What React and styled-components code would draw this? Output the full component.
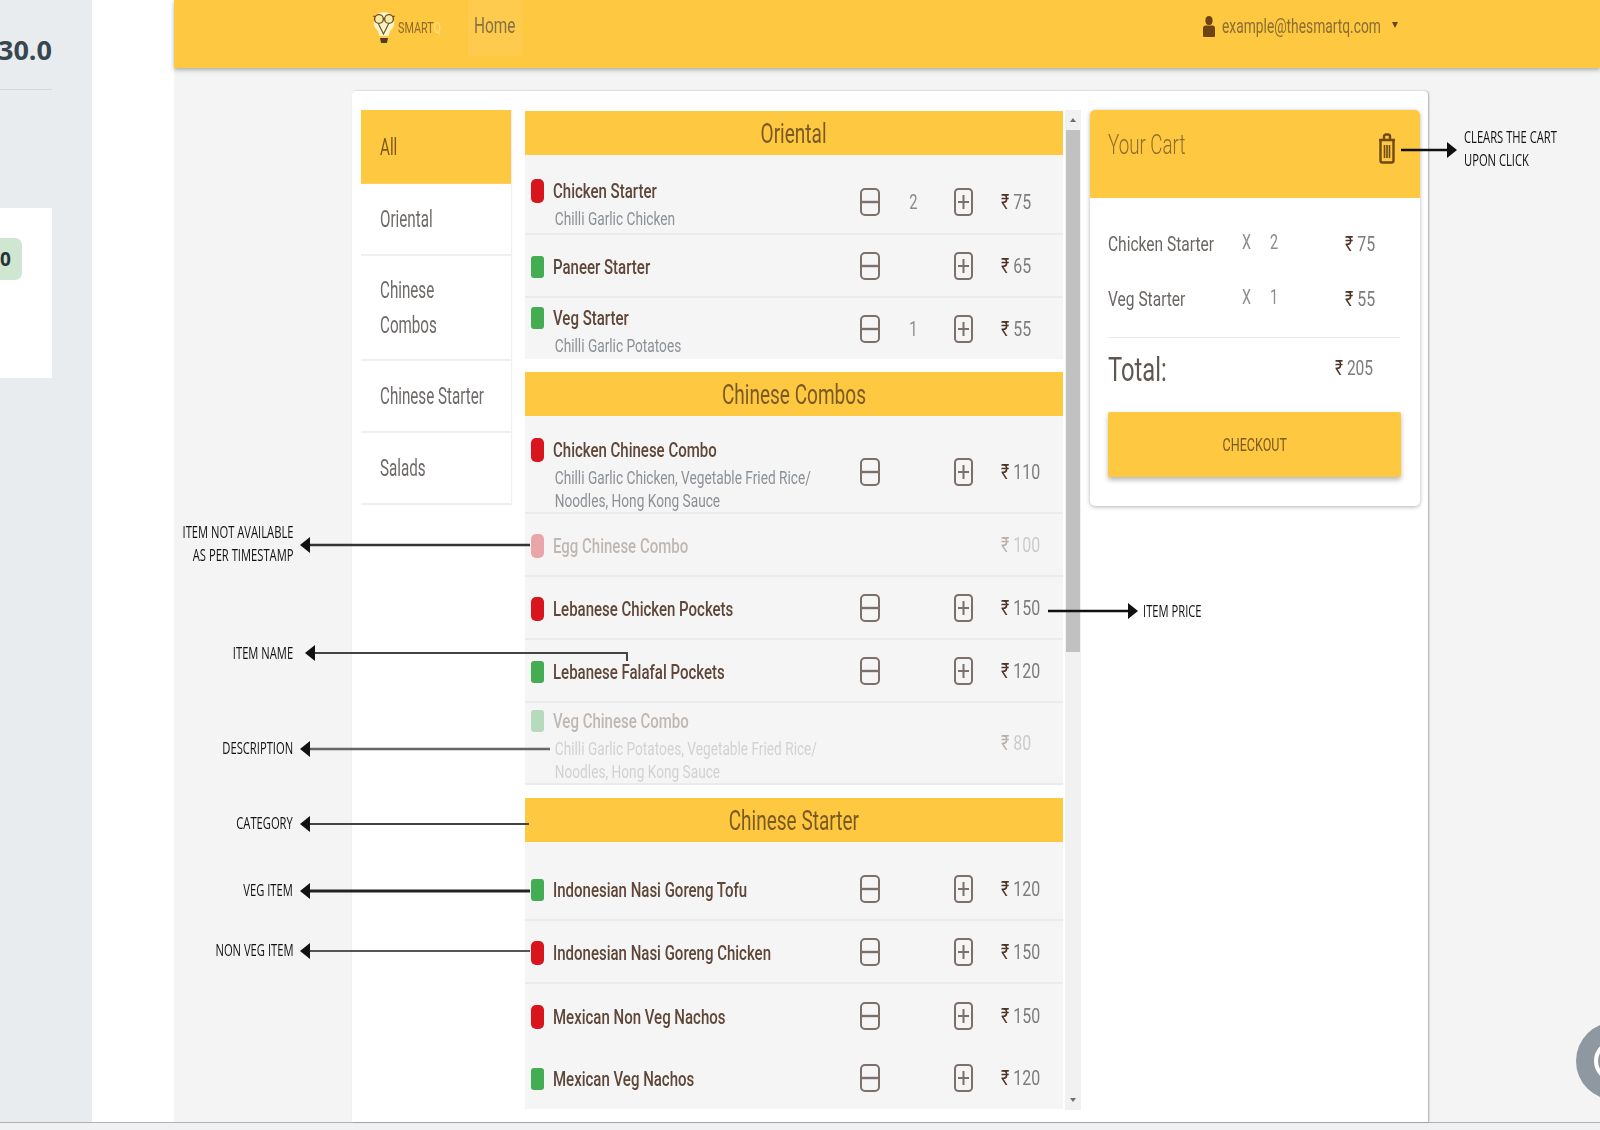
import React from 'react'
import styled, { createGlobalStyle, css } from 'styled-components'

const YELLOW = '#fec841'
const FONT = `Roboto, "Liberation Sans", sans-serif`

const GlobalStyle = createGlobalStyle`
  html, body {
    margin: 0;
    padding: 0;
    background: #fff;
    font-family: ${FONT};
  }
`

const squeeze = (x, origin = 'left center') => css`
  display: inline-block;
  white-space: nowrap;
  transform: scaleX(${x});
  transform-origin: ${origin};
`

const Page = styled.div`
  position: relative;
  width: 1600px;
  height: 1130px;
  overflow: hidden;
  display: flex;
  flex-direction: column;
`

const TopArea = styled.div`
  flex: 1;
  min-height: 0;
  display: flex;
`

const BottomBar = styled.div`
  height: 7px;
  background: #eff1f2;
  border-top: 1px solid #b0b3b5;
`

/* the dashboard behind the screenshot */
const Sidebar = styled.aside`
  width: 92px;
  flex: none;
  background: #e8ecef;
  box-shadow: 1px 0 2px #b5bcc2;
  padding: 33px 40px 0 0;
  box-sizing: border-box;
  overflow: hidden;
  display: flex;
  flex-direction: column;
  align-items: flex-end;
`

const Stat = styled.div`
  width: 52px;
  height: 56px;
  border-bottom: 1px solid #d4d9dd;
  font: 700 27px/34px "Open Sans", sans-serif;
  color: #37474f;
  text-align: right;
  white-space: nowrap;
  direction: rtl;
`

const SideCard = styled.div`
  width: 52px;
  height: 170px;
  margin-top: 118px;
  background: #fff;
  padding-top: 30px;
  box-sizing: border-box;
`

const SideBadge = styled.div`
  width: 22px;
  height: 42px;
  background: #cfe6d0;
  border-radius: 0 7px 7px 0;
  font: 700 19px/42px "Open Sans", sans-serif;
  color: #263238;
`

const Gutter = styled.div`
  width: 82px;
  flex: none;
  background: #fff;
`

/* the screenshot of the ordering page */
const Shot = styled.main`
  flex: 1;
  min-width: 0;
  background: #f4f4f4;
  filter: blur(0.6px);
  display: flex;
  flex-direction: column;
`

const Header = styled.header`
  height: 68px;
  flex: none;
  background: ${YELLOW};
  box-shadow: 0 2px 4px rgba(70, 90, 90, 0.45);
  padding: 0 202px 0 198px;
  display: flex;
  align-items: flex-start;
`

const Logo = styled.div`
  width: 96px;
  height: 56px;
  flex: none;
  display: flex;
  align-items: center;
  gap: 2px;
`

const LogoText = styled.span`
  ${squeeze(0.72)};
  font-size: 15px;
  color: #8d6a2a;
  width: 50px;

  b {
    font-weight: 400;
    color: #ffe385;
  }
`

const HomeTab = styled.div`
  width: 54px;
  height: 56px;
  padding-left: 6px;
  box-sizing: border-box;
  background: rgba(255, 255, 255, 0.07);
  line-height: 52px;
  flex: none;
`

const HomeText = styled.span`
  ${squeeze(0.7)};
  font-size: 22px;
  color: #857242;
`

const UserMenu = styled.div`
  margin-left: auto;
  height: 52px;
  display: flex;
  align-items: center;
`

const Email = styled.span`
  width: 170px;
  margin-left: 7px;

  span {
    ${squeeze(0.69)};
    font-size: 20px;
    color: #8a6d34;
  }
`

const Caret = styled.span`
  width: 0;
  height: 0;
  border-left: 3.5px solid transparent;
  border-right: 3.5px solid transparent;
  border-top: 6px solid #6d4312;
  margin-bottom: 3px;
`

const Panel = styled.section`
  margin: 23px 172px 0 178px;
  flex: 1;
  min-height: 0;
  background: #fff;
  border-radius: 4px 4px 0 0;
  box-shadow: 1px 0 2px rgba(0, 0, 0, 0.3);
  padding: 19px 8px 0 9px;
  display: flex;
  align-items: flex-start;
`

const CategoryList = styled.nav`
  width: 150px;
  flex: none;
  margin-right: 14px;
`

const Category = styled.div`
  height: ${p => p.$h}px;
  box-sizing: border-box;
  padding: 1px 19px 0;
  display: flex;
  flex-direction: column;
  justify-content: center;
  background: ${p => (p.$active ? YELLOW : '#fff')};
  border-bottom: ${p => (p.$active ? 'none' : '2px solid #eeeeee')};
  box-shadow: 1px 0 1px #f0f0f0;
`

const CategoryText = styled.span`
  ${squeeze(0.66)};
  font-size: 23px;
  line-height: 35px;
  color: ${p => (p.$active ? '#7a5a1c' : '#6e6a68')};
`

const MenuColumn = styled.div`
  width: 538px;
  flex: none;
  padding-top: 1px;
`

const SectionTitle = styled.h2`
  height: 44px;
  margin: ${p => (p.$first ? '0' : '13px 0 0')};
  background: ${YELLOW};
  display: flex;
  justify-content: center;
  align-items: center;
  font-weight: 400;
`

const SectionText = styled.span`
  ${squeeze(0.68, 'center')};
  font-size: 28px;
  color: #7a5a24;
`

const Row = styled.div`
  height: ${p => p.$h}px;
  box-sizing: border-box;
  padding: ${p => (p.$first ? '16px' : '0')} 0 0 6px;
  background: #f5f5f5;
  border-bottom: ${p => (p.$line ? '2px solid #ebebeb' : 'none')};
  display: flex;
  align-items: center;

  & > * {
    opacity: ${p => (p.$off ? 0.35 : 1)};
  }
`

const Info = styled.div`
  flex: 1;
  min-width: 0;
  padding-top: ${p => (p.$withDesc ? '3px' : '2px')};
`

const NameLine = styled.div`
  display: flex;
  align-items: center;
  gap: 9px;
  height: 28px;
  margin-bottom: ${p => (p.$withDesc ? '2px' : '0')};
`

const Dot = styled.span`
  width: 13px;
  height: ${p => (p.$veg ? 22 : 24)}px;
  flex: none;
  border-radius: ${p => (p.$veg ? 3 : 5)}px;
  background: ${p => (p.$veg ? '#44ac53' : '#d8141c')};
`

const ItemName = styled.span`
  ${squeeze(0.75)};
  font-size: 20px;
  font-weight: 500;
  color: #5e4638;
`

const ItemDesc = styled.div`
  ${squeeze(0.72)};
  display: block;
  padding-left: 33px;
  font-size: 19px;
  line-height: 23px;
  color: #8b9096;
`

const Stepper = styled.div`
  flex: none;
  width: 113px;
  display: flex;
  align-items: center;
  visibility: ${p => (p.$hidden ? 'hidden' : 'visible')};
`

const Qty = styled.span`
  width: 74px;
  flex: none;
  padding-right: 10px;
  box-sizing: border-box;
  text-align: center;
  font-size: 21px;
  color: #8c8c8c;
  ${squeeze(0.7, 'center')};
`

const Price = styled.div`
  flex: none;
  width: 62px;
  margin-left: 28px;
`

const PriceText = styled.span`
  ${squeeze(0.76)};
  font-size: 21px;
  color: #7c7c7c;

  b {
    font-weight: 400;
    color: #4f3425;
  }
`

const ScrollTrack = styled.div`
  width: 16px;
  height: 1000px;
  flex: none;
  margin: 0 9px 0 2px;
  background: #f1f1f1;
  display: flex;
  flex-direction: column;
  align-items: center;
  padding: 8px 0;
  box-sizing: border-box;
`

const ScrollArrow = styled.span`
  width: 0;
  height: 0;
  border-left: 3.5px solid transparent;
  border-right: 3.5px solid transparent;
  ${p => (p.$down ? 'border-top' : 'border-bottom')}: 4px solid #6f6f6f;
  margin-top: ${p => (p.$down ? 'auto' : '0')};
`

const ScrollThumb = styled.div`
  width: 14px;
  height: 522px;
  margin-top: 8px;
  background: #c1c1c1;
`

const Cart = styled.aside`
  width: 330px;
  flex: none;
  height: 396px;
  background: #fff;
  border-radius: 5px;
  box-shadow: 0 1px 4px rgba(0, 0, 0, 0.3);
`

const CartHeader = styled.div`
  height: 88px;
  box-sizing: border-box;
  background: ${YELLOW};
  border-radius: 5px 5px 0 0;
  padding: 18px 24px 0 18px;
  display: flex;
  justify-content: space-between;
`

const CartTitle = styled.span`
  ${squeeze(0.67)};
  font-size: 28px;
  font-weight: 300;
  line-height: 34px;
  color: #8f6d2d;
`

const TrashWrap = styled.div`
  padding-top: 5px;
`

const CartBody = styled.div`
  padding: 18px 20px 0 18px;
`

const CartRow = styled.div`
  height: 55px;
  display: flex;
  align-items: center;
`

const CartName = styled.div`
  width: 134px;

  span {
    ${squeeze(0.74)};
    font-size: 21px;
    color: #6a6664;
  }
`

const CartQty = styled.div`
  width: ${p => p.$w}px;
  margin-bottom: 4px;

  span {
    ${squeeze(0.72)};
    font-size: 20px;
    color: #8d8d8d;
  }
`

const CartPrice = styled.div`
  span {
    ${squeeze(0.76)};
    font-size: 21px;
    color: #7c7c7c;
  }

  b {
    font-weight: 400;
    color: #4f3425;
  }
`

const CartDivider = styled.hr`
  height: 1px;
  border: 0;
  margin: 11px 0 0;
  background: #eaeaea;
`

const TotalRow = styled.div`
  height: 74px;
  display: flex;
  align-items: flex-start;
`

const TotalLabel = styled.div`
  width: 227px;

  span {
    ${squeeze(0.72)};
    font-size: 33px;
    line-height: 64px;
    color: #5f5650;
  }
`

const TotalPrice = styled.div`
  span {
    ${squeeze(0.74)};
    font-size: 21px;
    line-height: 60px;
    color: #7c7c7c;
  }

  b {
    font-weight: 400;
    color: #4f3425;
  }
`

const CheckoutButton = styled.button`
  display: flex;
  width: 293px;
  height: 65px;
  border: 0;
  border-radius: 2px;
  background: ${YELLOW};
  box-shadow: 0 3px 5px rgba(0, 0, 0, 0.28);
  justify-content: center;
  align-items: center;
  font-family: ${FONT};
  padding: 0;

  span {
    ${squeeze(0.66, 'center')};
    font-size: 19px;
    color: #7a5a24;
  }
`

const Annotations = styled.svg`
  position: absolute;
  inset: 0;
  width: 1600px;
  height: 1130px;
  pointer-events: none;
`

const NoteLabel = styled.div`
  position: absolute;
  top: ${p => p.$y}px;
  ${p => (p.$right ? `right: ${1600 - p.$x}px;` : `left: ${p.$x}px;`)}
  font-family: "Open Sans", sans-serif;
  font-size: 16px;
  line-height: 23px;
  color: #111;
  white-space: nowrap;
  text-align: ${p => (p.$right ? 'right' : 'left')};
  transform: scaleX(0.7);
  transform-origin: ${p => (p.$right ? 'right' : 'left')} center;
`

const HelpBubble = styled.div`
  position: absolute;
  left: 1576px;
  top: 1022px;
  width: 78px;
  height: 78px;
  border-radius: 50%;
  background: #8f98a1;

  &::after {
    content: '';
    position: absolute;
    left: 18px;
    top: 18px;
    width: 42px;
    height: 42px;
    box-sizing: border-box;
    border: 4px solid #fff;
    border-radius: 50%;
  }
`

const MinusIcon = () => (
  <svg width="20" height="28" viewBox="0 0 20 28" fill="none" stroke="#7d706a" strokeWidth="2">
    <rect x="1" y="1" width="18" height="26" rx="4" />
    <path d="M2 14h16" strokeWidth="2.4" />
  </svg>
)

const PlusIcon = () => (
  <svg width="19" height="28" viewBox="0 0 19 28" fill="none" stroke="#7d706a" strokeWidth="2">
    <rect x="1" y="1" width="17" height="26" rx="3.5" />
    <path d="M4 14h11M9.5 7v14" />
  </svg>
)

const TrashIcon = () => (
  <svg width="18" height="31" viewBox="0 0 18 31" fill="none" stroke="#6f4a12" strokeWidth="2.4">
    <path d="M1 7h16M6 6V3.5a2 2 0 0 1 2-2h2a2 2 0 0 1 2 2V6" />
    <path d="M2.5 7v20.5a2 2 0 0 0 2 2h9a2 2 0 0 0 2-2V7" />
    <path d="M6.5 12v13M9 12v13M11.5 12v13" strokeWidth="1.6" />
  </svg>
)

const UserIcon = () => (
  <svg width="12" height="21" viewBox="0 0 12 21" fill="#6d4312">
    <ellipse cx="6" cy="4.5" rx="3.6" ry="4.5" />
    <path d="M2.4 9.5h7.2c1.6 0 2.4 1.4 2.4 3V20a1 1 0 0 1-1 1H1a1 1 0 0 1-1-1v-7.5c0-1.6.8-3 2.4-3z" />
  </svg>
)

const LogoIcon = () => (
  <svg width="24" height="36" viewBox="0 0 24 36" fill="none">
    <path d="M12 2a10.5 10.5 0 0 0-7 18c1.6 1.7 2 3.4 2.2 6h9.6c.2-2.6.6-4.3 2.2-6a10.5 10.5 0 0 0-7-18z" fill="#fff3c9" />
    <circle cx="7" cy="9" r="4.4" stroke="#6b5426" strokeWidth="1.4" fill="#ffe9a6" />
    <circle cx="17" cy="9" r="4.4" stroke="#6b5426" strokeWidth="1.4" fill="#ffe9a6" />
    <path d="M1 6l3 1M23 6l-3 1M6.5 14l5 10 5-10" stroke="#6b5426" strokeWidth="1.2" />
    <path d="M8 28h8l-1 5H9z" fill="#4f3d1e" />
  </svg>
)

const categories = [
  { lines: ['All'], h: 74, active: true },
  { lines: ['Oriental'], h: 72 },
  { lines: ['Chinese', 'Combos'], h: 105 },
  { lines: ['Chinese Starter'], h: 72 },
  { lines: ['Salads'], h: 72 },
]

const sections = [
  {
    title: 'Oriental',
    items: [
      { name: 'Chicken Starter', desc: ['Chilli Garlic Chicken'], price: 75, qty: 2, h: 80, first: true, line: true },
      { name: 'Paneer Starter', veg: true, price: 65, h: 63, line: true },
      { name: 'Veg Starter', veg: true, desc: ['Chilli Garlic Potatoes'], price: 55, qty: 1, h: 61 },
    ],
  },
  {
    title: 'Chinese Combos',
    items: [
      {
        name: 'Chicken Chinese Combo',
        desc: ['Chilli Garlic Chicken, Vegetable Fried Rice/', 'Noodles, Hong Kong Sauce'],
        price: 110,
        h: 98,
        first: true,
        line: true,
      },
      { name: 'Egg Chinese Combo', price: 100, h: 63, off: true, line: true },
      { name: 'Lebanese Chicken Pockets', price: 150, h: 63, line: true },
      { name: 'Lebanese Falafal Pockets', veg: true, price: 120, h: 63, line: true },
      {
        name: 'Veg Chinese Combo',
        veg: true,
        desc: ['Chilli Garlic Potatoes, Vegetable Fried Rice/', 'Noodles, Hong Kong Sauce'],
        price: 80,
        h: 82,
        off: true,
        line: true,
      },
    ],
  },
  {
    title: 'Chinese Starter',
    items: [
      { name: 'Indonesian Nasi Goreng Tofu', veg: true, price: 120, h: 79, first: true, line: true },
      { name: 'Indonesian Nasi Goreng Chicken', price: 150, h: 63, line: true },
      { name: 'Mexican Non Veg Nachos', price: 150, h: 63 },
      { name: 'Mexican Veg Nachos', veg: true, price: 120, h: 62 },
    ],
  },
]

const cartItems = [
  { name: 'Chicken Starter', qty: 2, price: 75 },
  { name: 'Veg Starter', qty: 1, price: 55 },
]

// [tipX, endX, y, stroke, colour] for arrows pointing left, tail on the right
const leftArrows = [
  [300, 530, 545, 2.4, '#333'],
  [305, 627, 653, 2, '#444'],
  [300, 550, 749, 2.6, '#666'],
  [300, 529, 824, 2, '#444'],
  [300, 530, 891, 2.8, '#222'],
  [300, 530, 951, 2, '#555'],
]

const rightArrows = [
  [1048, 1138, 611],
  [1401, 1457, 150],
]

const leftNotes = [
  { y: 521, lines: ['ITEM NOT AVAILABLE', 'AS PER TIMESTAMP'] },
  { y: 642, lines: ['ITEM NAME'] },
  { y: 737, lines: ['DESCRIPTION'] },
  { y: 812, lines: ['CATEGORY'] },
  { y: 879, lines: ['VEG ITEM'] },
  { y: 939, lines: ['NON VEG ITEM'] },
]

const Lines = ({ lines }) =>
  lines.map((line, i) => (
    <React.Fragment key={line}>
      {i > 0 && <br />}
      {line}
    </React.Fragment>
  ))

const MenuRow = ({ item }) => (
  <Row $h={item.h} $first={item.first} $line={item.line} $off={item.off}>
    <Info $withDesc={!!item.desc}>
      <NameLine $withDesc={!!item.desc}>
        <Dot $veg={item.veg} />
        <ItemName>{item.name}</ItemName>
      </NameLine>
      {item.desc && item.desc.map(d => <ItemDesc key={d}>{d}</ItemDesc>)}
    </Info>
    <Stepper $hidden={item.off}>
      <MinusIcon />
      <Qty>{item.qty}</Qty>
      <PlusIcon />
    </Stepper>
    <Price>
      <PriceText>
        <b>₹</b> {item.price}
      </PriceText>
    </Price>
  </Row>
)

const App = () => (
  <Page>
    <GlobalStyle />
    <TopArea>
      <Sidebar>
        <Stat>30.0</Stat>
        <SideCard>
          <SideBadge>0</SideBadge>
        </SideCard>
      </Sidebar>
      <Gutter />
      <Shot>
        <Header>
          <Logo>
            <LogoIcon />
            <LogoText>
              SMART<b>Q</b>
            </LogoText>
          </Logo>
          <HomeTab>
            <HomeText>Home</HomeText>
          </HomeTab>
          <UserMenu>
            <UserIcon />
            <Email>
              <span>example@thesmartq.com</span>
            </Email>
            <Caret />
          </UserMenu>
        </Header>
        <Panel>
          <CategoryList>
            {categories.map(c => (
              <Category key={c.lines[0] + c.h} $h={c.h} $active={c.active}>
                {c.lines.map(line => (
                  <CategoryText key={line} $active={c.active}>
                    {line}
                  </CategoryText>
                ))}
              </Category>
            ))}
          </CategoryList>
          <MenuColumn>
            {sections.map((s, i) => (
              <React.Fragment key={s.title}>
                <SectionTitle $first={i === 0}>
                  <SectionText>{s.title}</SectionText>
                </SectionTitle>
                {s.items.map(item => (
                  <MenuRow key={item.name} item={item} />
                ))}
              </React.Fragment>
            ))}
          </MenuColumn>
          <ScrollTrack>
            <ScrollArrow />
            <ScrollThumb />
            <ScrollArrow $down />
          </ScrollTrack>
          <Cart>
            <CartHeader>
              <CartTitle>Your Cart</CartTitle>
              <TrashWrap>
                <TrashIcon />
              </TrashWrap>
            </CartHeader>
            <CartBody>
              {cartItems.map(c => (
                <CartRow key={c.name}>
                  <CartName>
                    <span>{c.name}</span>
                  </CartName>
                  <CartQty $w={28}>
                    <span>X</span>
                  </CartQty>
                  <CartQty $w={75}>
                    <span>{c.qty}</span>
                  </CartQty>
                  <CartPrice>
                    <span>
                      <b>₹</b> {c.price}
                    </span>
                  </CartPrice>
                </CartRow>
              ))}
              <CartDivider />
              <TotalRow>
                <TotalLabel>
                  <span>Total:</span>
                </TotalLabel>
                <TotalPrice>
                  <span>
                    <b>₹</b> 205
                  </span>
                </TotalPrice>
              </TotalRow>
              <CheckoutButton>
                <span>CHECKOUT</span>
              </CheckoutButton>
            </CartBody>
          </Cart>
        </Panel>
      </Shot>
    </TopArea>
    <BottomBar />

    <Annotations viewBox="0 0 1600 1130">
      {leftArrows.map(([tip, end, y, w, colour]) => (
        <g key={y}>
          <path d={`M${tip + 6} ${y}H${end}`} stroke={colour} strokeWidth={w} />
          <path d={`M${tip} ${y}l10 -8v16z`} fill="#111" />
        </g>
      ))}
      <path d="M627 652v9" stroke="#444" strokeWidth="2" />
      {rightArrows.map(([start, tip, y]) => (
        <g key={y}>
          <path d={`M${start} ${y}H${tip - 6}`} stroke="#111" strokeWidth="2.6" />
          <path d={`M${tip} ${y}l-10 -8v16z`} fill="#111" />
        </g>
      ))}
    </Annotations>
    {leftNotes.map(n => (
      <NoteLabel key={n.y} $right $x={293} $y={n.y}>
        <Lines lines={n.lines} />
      </NoteLabel>
    ))}
    <NoteLabel $x={1143} $y={600}>
      ITEM PRICE
    </NoteLabel>
    <NoteLabel $x={1464} $y={126}>
      <Lines lines={['CLEARS THE CART', 'UPON CLICK']} />
    </NoteLabel>
    <HelpBubble />
  </Page>
)

export default App
